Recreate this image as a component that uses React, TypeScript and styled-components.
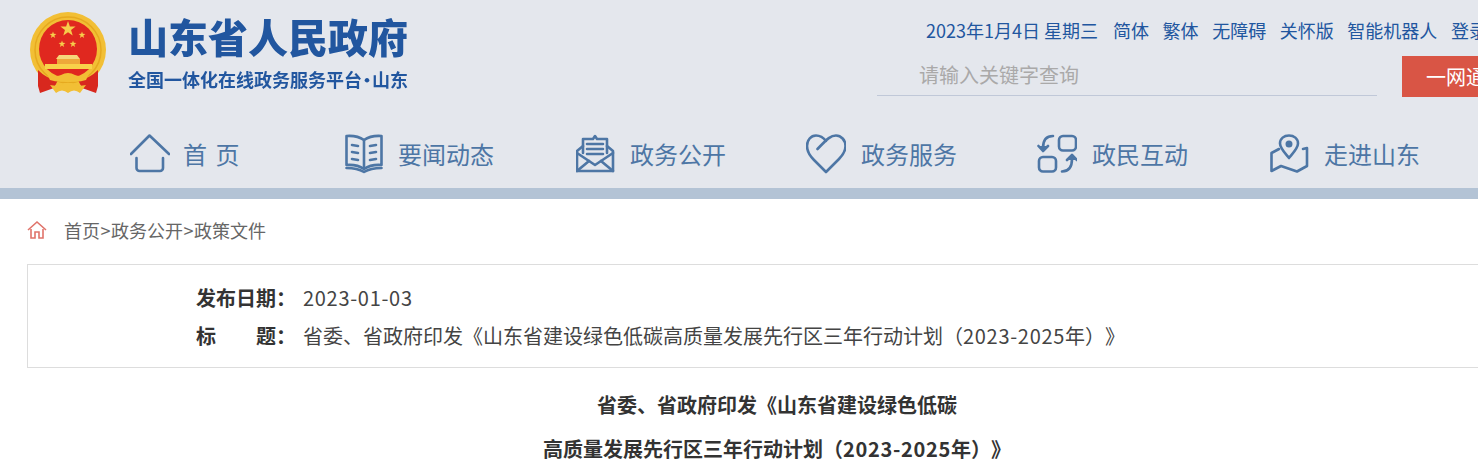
import * as React from 'react';
import styled, { createGlobalStyle } from 'styled-components';

const GlobalStyle = createGlobalStyle`
html, body {
  margin: 0;
  padding: 0;
  background: #fff;
  overflow: hidden;
}
body {
  font-family: "Noto Sans CJK SC", "Noto Sans", sans-serif;
  text-spacing-trim: space-all;
}
`;

const Page = styled.div`
  width: 1554px;
`;

const Header = styled.header`
  height: 188px;
  background: #e4e7ed;
  border-bottom: 11px solid #b3c3d5;
  display: flex;
  flex-direction: column;
`;

const HeadRow = styled.div`
  height: 120px;
  display: flex;
  justify-content: space-between;
`;

const Brand = styled.div`
  display: flex;
  padding: 12px 0 0 30px;
  gap: 22px;
`;

const BrandText = styled.div`
  margin-top: -3px;
  display: flex;
  flex-direction: column;
  filter: blur(0.3px);
`;

const BrandTitle = styled.div`
  font-size: 40px;
  line-height: 54px;
  font-weight: 900;
  color: #21569f;
`;

const BrandSub = styled.div`
  margin-top: 4px;
  font-size: 18px;
  line-height: 24px;
  font-weight: 700;
  color: #21569f;
  white-space: nowrap;
`;

const BrandDot = styled.span`
  letter-spacing: -4px;
  margin-left: -4px;
`;

const HeadRight = styled.div`
  width: 677px;
  display: flex;
  flex-direction: column;
`;

const TopLinks = styled.div`
  height: 56px;
  padding: 4px 0 0 49px;
  display: flex;
  align-items: center;
  gap: 13.6px;
  font-size: 18px;
  color: #21569f;
  white-space: nowrap;
  box-sizing: border-box;
`;

const DateText = styled.span`
  margin-right: 1.4px;
`;

const SearchRow = styled.div`
  display: flex;
  gap: 25px;
`;

const SearchBox = styled.div`
  width: 458px;
  height: 39px;
  padding-left: 42px;
  border-bottom: 1px solid #c0c8d8;
  font-size: 20px;
  line-height: 38px;
  color: #aaa9a9;
`;

const SearchButton = styled.div`
  width: 150px;
  height: 41px;
  padding-left: 24px;
  box-sizing: border-box;
  background: #d95545;
  color: #fff;
  font-size: 20px;
  line-height: 41px;
  white-space: nowrap;
`;

const Nav = styled.nav`
  display: flex;
  padding-left: 130px;
`;

const NavItem = styled.div<{ $width: number; $gap: number }>`
  width: ${(p) => p.$width}px;
  height: 68px;
  display: flex;
  align-items: center;
  gap: ${(p) => p.$gap}px;
  font-size: 24px;
  color: #4d76a5;
  white-space: pre;
  flex: none;
`;

const NavLabel = styled.span`
  padding-bottom: 2px;
  word-spacing: 3px;
`;

const NavIcon = styled.svg`
  width: 40px;
  height: 40px;
  flex: none;
  fill: none;
  stroke: #4d76a5;
  stroke-width: 2.6;
  stroke-linecap: round;
  stroke-linejoin: round;
`;

const Crumbs = styled.div`
  height: 65px;
  padding: 0 0 4px 27px;
  box-sizing: border-box;
  display: flex;
  align-items: center;
  gap: 17px;
  font-size: 18px;
  color: #666;
`;

const CrumbSep = styled.span`
  margin: 0 0.5px;
`;

const CrumbIcon = styled.svg`
  width: 20px;
  height: 20px;
  fill: none;
  stroke: #e0736a;
  stroke-width: 1.6;
  flex: none;
`;

const InfoBox = styled.section`
  margin-left: 27px;
  padding: 14px 0 12px 168px;
  border: 1px solid #ddd;
  font-size: 20px;
  line-height: 38px;
  color: #333;
`;

const InfoRow = styled.div`
  display: flex;
  gap: 7px;
`;

const InfoLabel = styled.div`
  width: 100px;
  display: flex;
  justify-content: space-between;
  font-weight: 700;
  flex: none;
`;

const InfoValue = styled.div`
  color: #444;
  white-space: nowrap;
`;

const Digits = styled.span`
  letter-spacing: 0.7px;
`;

const Article = styled.article`
  width: 1500px;
  margin: 15px 0 0 27px;
  text-align: center;
  font-size: 20px;
  line-height: 44px;
  font-weight: 700;
  color: #333;
`;

const starPoints = (cx: number, cy: number, r: number) =>
  Array.from({ length: 10 }, (_, i) => {
    const a = (Math.PI / 5) * i - Math.PI / 2;
    const d = i % 2 === 0 ? r : r * 0.4;
    return `${(cx + d * Math.cos(a)).toFixed(2)},${(cy + d * Math.sin(a)).toFixed(2)}`;
  }).join(' ');

const Emblem = () => (
  <svg width="76" height="82" viewBox="0 0 76 82" style={{ flex: 'none', filter: 'blur(0.3px)' }}>
    <circle cx="38" cy="38" r="38" fill="#f2bf35" />
    <circle cx="38" cy="38" r="33" fill="none" stroke="#e6a91f" strokeWidth="1.5" />
    <circle cx="38" cy="37" r="29" fill="#e0281f" />
    <polygon points={starPoints(38, 17, 8)} fill="#f6cd4b" />
    <polygon points={starPoints(23, 23, 3.6)} fill="#f6cd4b" />
    <polygon points={starPoints(52, 23, 3.6)} fill="#f6cd4b" />
    <polygon points={starPoints(32, 32, 3.6)} fill="#f6cd4b" />
    <polygon points={starPoints(43, 32, 3.6)} fill="#f6cd4b" />
    <path d="M29 43 H47 L50 47 H26 Z" fill="#f6d77a" />
    <rect x="27" y="47" width="23" height="5" fill="#eea93a" />
    <rect x="15" y="52" width="47" height="5" fill="#f8d24a" />
    <path d="M8 58 C14 64 20 67 28 68 L24 76 L10 81 L8 74 Z" fill="#d8281e" />
    <path d="M68 58 C62 64 56 67 48 68 L52 76 L66 81 L68 74 Z" fill="#d8281e" />
    <path d="M16 60 Q24 66 31 63 Q38 59 45 63 Q52 66 60 60 L56 68 Q48 71 38 69 Q28 71 20 68 Z" fill="#f2bf35" />
    <path d="M20 73 Q30 75 34 71 H42 Q46 75 56 73 L50 81 Q44 76 38 81 Q32 76 26 81 Z" fill="#f2bf35" />
  </svg>
);

const navItems: { label: string; width: number; gap: number; icon: React.ReactNode }[] = [
  {
    label: '首 页',
    width: 215,
    gap: 13,
    icon: (
      <>
        <path d="M1 20 L19.5 1.5 L39 20" />
        <path d="M6.5 24 V34 a3 3 0 0 0 3 3 H30 a3 3 0 0 0 3 -3 V24" />
      </>
    ),
  },
  {
    label: '要闻动态',
    width: 231,
    gap: 13,
    icon: (
      <>
        <path d="M19 6 C14 2.5 8 1.5 1.5 2 V31 C8 30.5 14 31.5 19 35 C24 31.5 30 30.5 36.5 31 V2 C30 1.5 24 2.5 19 6 Z" />
        <path d="M19 6 V35" />
        <path d="M7 11 L13 12 M7 18 L13 19 M7 25 L13 26 M25 12 L31 11 M25 19 L31 18 M25 26 L31 25" />
        <path d="M1.5 34 C9 34 14 35 19 38 C24 35 29 34 36.5 34" />
      </>
    ),
  },
  {
    label: '政务公开',
    width: 230,
    gap: 14,
    icon: (
      <>
        <path d="M7 19 V5 H17 L19 2 L21 5 H31 V19" />
        <path d="M11 10 H27 M11 15 H27 M11 20 H27" />
        <path d="M7 12 L1 17 V37 H37 V17 L31 12" />
        <path d="M1 19 L19 31 L37 19" />
        <path d="M1 37 L13 27 M37 37 L25 27" />
      </>
    ),
  },
  {
    label: '政务服务',
    width: 231,
    gap: 15,
    icon: (
      <path d="M20 7 C17 3 13 1.5 10 1.5 C5 1.5 1 6 1 12 C1 18 4 22 8 26 L20 38 L33 25 C36 22 39.5 18 39.5 12 C39.5 6 35 1.5 30 1.5 C25 1.5 22 4 11.5 15" />
    ),
  },
  {
    label: '政民互动',
    width: 233,
    gap: 15,
    icon: (
      <>
        <rect x="22" y="2" width="17" height="14.5" rx="4" />
        <rect x="2" y="23" width="17" height="14.5" rx="4" />
        <path d="M16 2 C9 2 6 6 6 14" />
        <path d="M1.5 12 L6 17 L11 12" fill="#4d76a5" />
        <path d="M25 37.5 C32 37.5 35 33 35 25" />
        <path d="M30 26 L35 21 L40 26" fill="#4d76a5" />
      </>
    ),
  },
  {
    label: '走进山东',
    width: 232,
    gap: 14,
    icon: (
      <>
        <path d="M19 24 C14 18 10 14 10 9.5 C10 4.5 14 1.5 19 1.5 C24 1.5 28 4.5 28 9.5 C28 14 24 18 19 24 Z" />
        <circle cx="19" cy="10" r="2.2" fill="#4d76a5" />
        <path d="M9 15 L1.5 19 V37 L11 32 L27 37.5 L37 32 V14 M33 15 L37 14" />
      </>
    ),
  },
];

export default function App() {
  return (
    <Page>
      <GlobalStyle />
      <Header>
        <HeadRow>
          <Brand>
            <Emblem />
            <BrandText>
              <BrandTitle>山东省人民政府</BrandTitle>
              <BrandSub>
                全国一体化在线政务服务平台<BrandDot>·</BrandDot>山东
              </BrandSub>
            </BrandText>
          </Brand>
          <HeadRight>
            <TopLinks>
              <DateText>2023年1月4日 星期三</DateText>
              <span>简体</span>
              <span>繁体</span>
              <span>无障碍</span>
              <span>关怀版</span>
              <span>智能机器人</span>
              <span>登录</span>
            </TopLinks>
            <SearchRow>
              <SearchBox>请输入关键字查询</SearchBox>
              <SearchButton>一网通办</SearchButton>
            </SearchRow>
          </HeadRight>
        </HeadRow>
        <Nav>
          {navItems.map((item) => (
            <NavItem key={item.label} $width={item.width} $gap={item.gap}>
              <NavIcon viewBox="0 0 40 40">{item.icon}</NavIcon>
              <NavLabel>{item.label}</NavLabel>
            </NavItem>
          ))}
        </Nav>
      </Header>
      <Crumbs>
        <CrumbIcon viewBox="0 0 20 20">
          <path d="M1 10 L10 2 L19 10" />
          <path d="M4 9 V18 H8 V12 H12 V18 H16 V9" />
        </CrumbIcon>
        <span>
          首页<CrumbSep>&gt;</CrumbSep>政务公开<CrumbSep>&gt;</CrumbSep>政策文件
        </span>
      </Crumbs>
      <InfoBox>
        <InfoRow>
          <InfoLabel>发布日期：</InfoLabel>
          <InfoValue>
            <Digits>2023-01-03</Digits>
          </InfoValue>
        </InfoRow>
        <InfoRow>
          <InfoLabel>
            <span>标</span>
            <span>题：</span>
          </InfoLabel>
          <InfoValue>
            省委、省政府印发《山东省建设绿色低碳高质量发展先行区三年行动计划（<Digits>2023-2025</Digits>年）》
          </InfoValue>
        </InfoRow>
      </InfoBox>
      <Article>
        省委、省政府印发《山东省建设绿色低碳
        <br />
        高质量发展先行区三年行动计划（<Digits>2023-2025</Digits>年）》
      </Article>
    </Page>
  );
}
